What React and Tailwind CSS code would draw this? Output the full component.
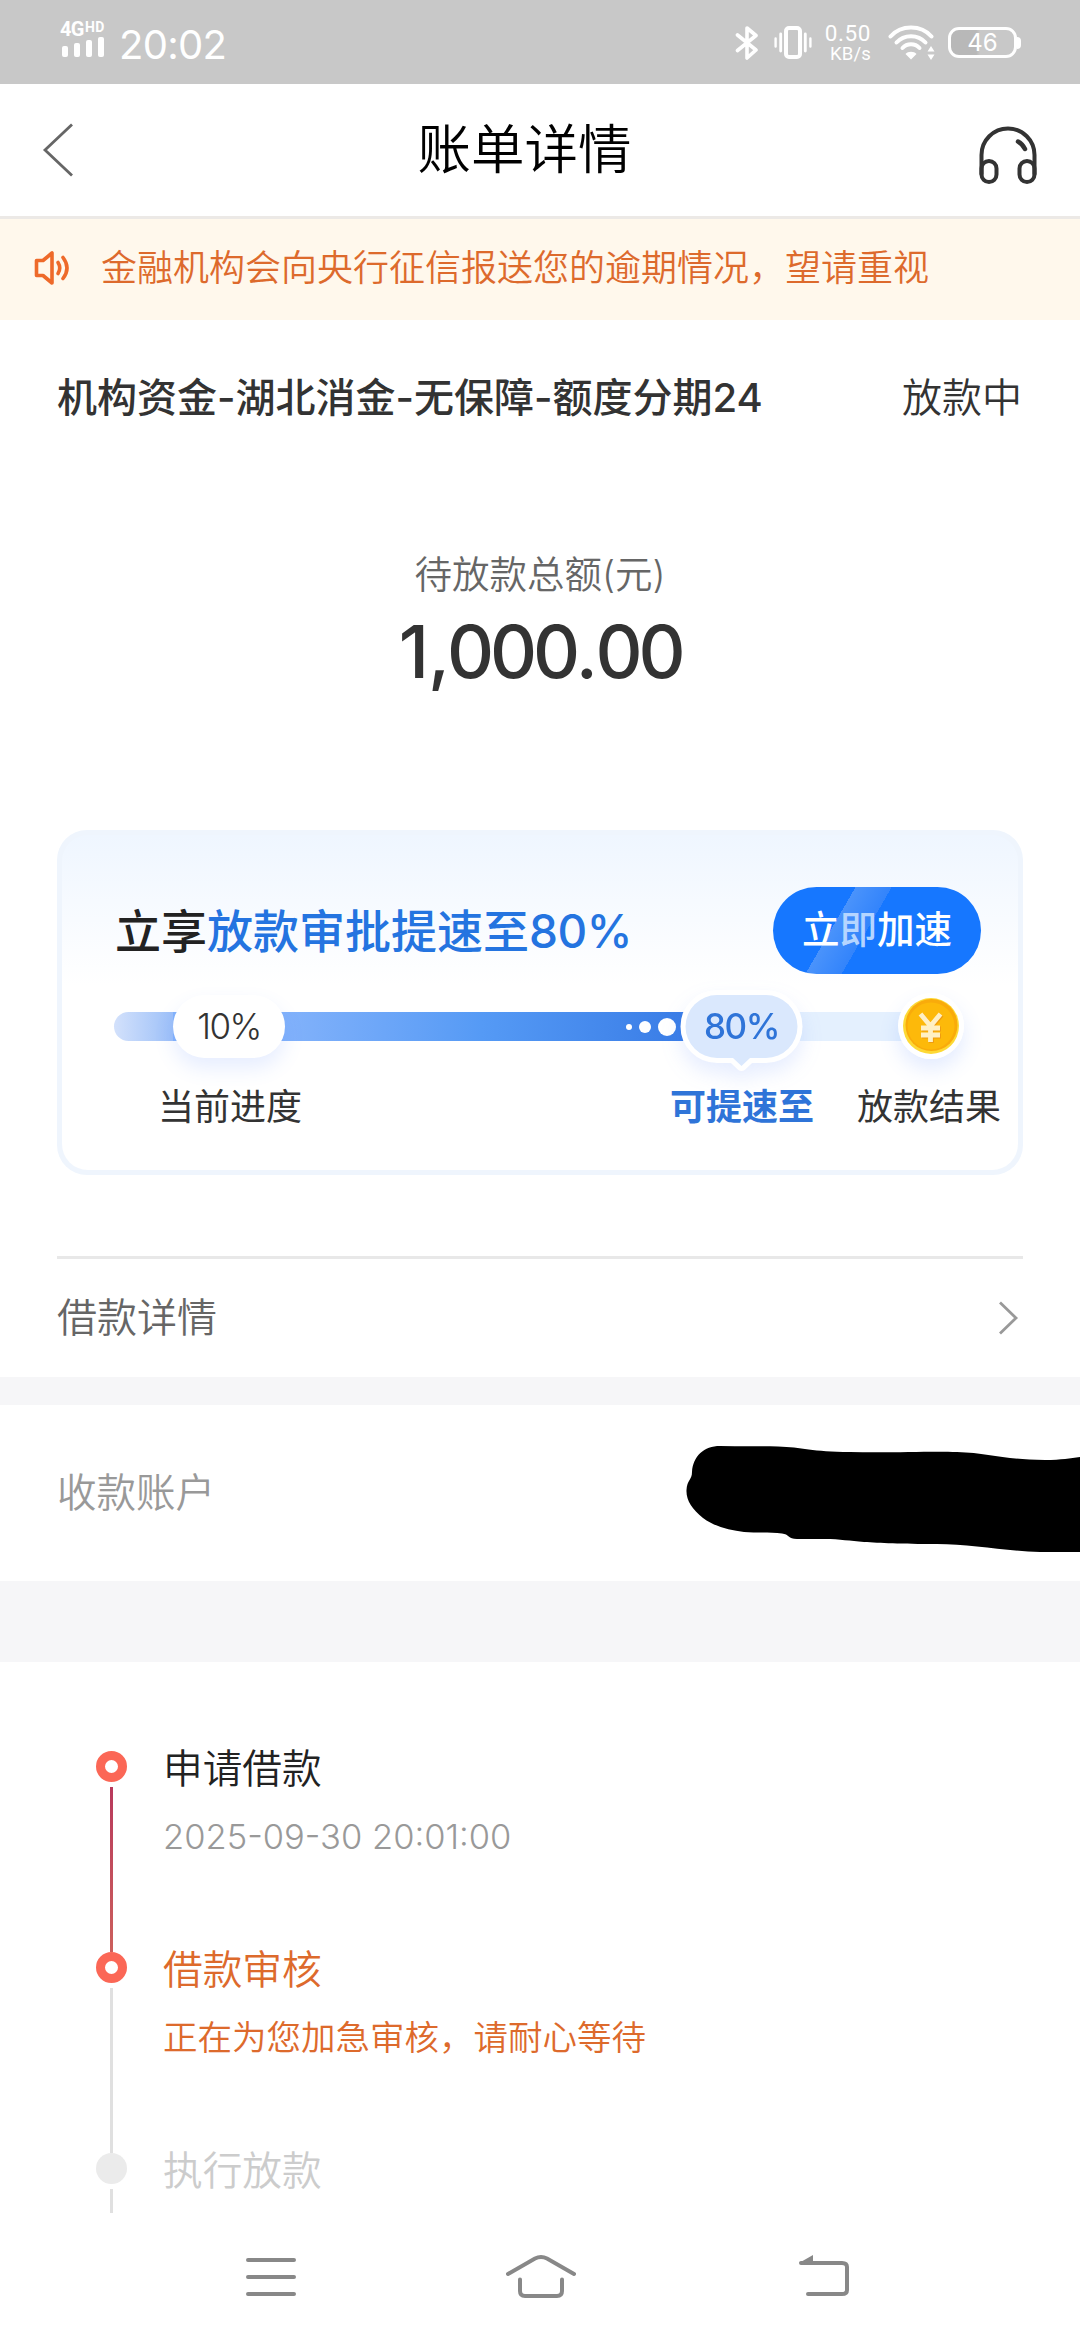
import { clsx } from "clsx"

const steps = [
  { title: "申请借款", desc: "2025-09-30 20:01:00", state: "done" },
  { title: "借款审核", desc: "正在为您加急审核，请耐心等待", state: "active" },
  { title: "执行放款", desc: "", state: "pending" },
]

function StatusBar() {
  return (
    <div className="flex h-[84px] shrink-0 items-start justify-between bg-[#c8c8c8] pr-[59px] pl-[60px] text-white">
      <div className="flex items-start">
        <div className="flex w-[46px] flex-col pt-[21px]">
          <div className="flex h-[15px] items-start font-bold">
            <span className="w-[25px] font-[Roboto,sans-serif] text-[20px] leading-[17px] tracking-[-0.6px]">4G</span>
            <span className="font-[Roboto,sans-serif] text-[14px] leading-[13px] tracking-[0.4px]">HD</span>
          </div>
          <div className="flex h-[21px] items-end gap-[6px] pl-[2px]">
            <i className="h-[11px] w-[6px] rounded-[2px] bg-white" />
            <i className="h-[14px] w-[6px] rounded-[2px] bg-white" />
            <i className="h-[17px] w-[6px] rounded-[2px] bg-white" />
            <i className="h-[20px] w-[6px] rounded-[2px] bg-white" />
          </div>
        </div>
        <span className="pt-[20px] pl-[13px] text-[40px] leading-[49px] tracking-[-0.7px]">20:02</span>
      </div>

      <div className="flex items-start pt-[25px]">
        <svg className="h-[36px] w-[24px]" viewBox="0 0 24 36" fill="none" stroke="currentColor" strokeWidth="3.6" strokeLinejoin="round" strokeLinecap="round">
          <path d="M2.5 10 L21 25 L12 33 V3 L21 10.5 L2.5 25.5" />
        </svg>
        <svg className="ml-[15px] h-[34px] w-[38px]" viewBox="0 0 38 34" fill="none" stroke="currentColor" strokeLinecap="round">
          <rect x="12" y="3" width="14" height="29" rx="3" strokeWidth="4" />
          <path d="M6.7 9v17M31.3 9v17" strokeWidth="2.8" />
          <path d="M1.6 13.5v8M36.4 13.5v8" strokeWidth="2.4" />
        </svg>
        <div className="ml-[11px] flex w-[49px] flex-col items-end pr-[1px] font-[Roboto,sans-serif]">
          <span className="h-[18px] text-[22.5px] leading-[17px] tracking-[0.6px]">0.50</span>
          <span className="mt-[1px] text-[18.5px] leading-[20px] tracking-[0.2px]">KB/s</span>
        </div>
        <svg className="ml-[16px] h-[36px] w-[48px]" viewBox="0 0 48 36" fill="none" stroke="currentColor" strokeWidth="4" strokeLinecap="round">
          <path d="M2.5 11.5 C13 -0.5 33 -0.5 43.5 11.5" />
          <path d="M8.5 17.5 C16 9 30 9 37.5 17.5" />
          <path d="M14.5 23 C19 18 27 18 31.5 23" />
          <path d="M17.5 29 C20 26 26 26 28.5 29 L23 34.5 Z" fill="currentColor" stroke="none" />
          <path d="M39.5 26.5 L43 21 L46.5 26.5 Z M39.5 29.5 L43 35 L46.5 29.5 Z" fill="currentColor" stroke="none" />
        </svg>
        <div className="mt-[2px] ml-[12px] flex h-[31px] items-center">
          <div className="flex h-[31px] w-[69px] items-center justify-center rounded-[11px] border-[3px] border-white bg-linear-to-r from-[#b8b8b8] from-40% to-[#c8c8c8] to-46% text-[24px] leading-none">
            46
          </div>
          <i className="h-[12px] w-[4px] rounded-r-[4px] bg-white" />
        </div>
      </div>
    </div>
  )
}

function Header() {
  return (
    <div className="flex h-[135px] shrink-0 items-center justify-between border-b-[3px] border-[#ece9e6] pr-[43px] pl-[42px]">
      <svg className="h-[54px] w-[32px]" viewBox="0 0 32 54" fill="none" stroke="#666" strokeWidth="2.8">
        <path d="M30 1.5 L3 27 L30 52.5" />
      </svg>
      <h1 className="mr-[4px] pb-[1px] text-[53.5px] leading-[60px] font-[350] text-black">账单详情</h1>
      <svg className="mt-[10px] h-[58px] w-[58px]" viewBox="0 0 58 58" fill="none" stroke="#333" strokeWidth="4" strokeLinecap="round">
        <path d="M2.5 48 V29 A26.5 26.5 0 0 1 55.5 29 V48" />
        <rect x="2.5" y="35" width="15" height="21" rx="7.5" />
        <rect x="40.5" y="35" width="15" height="21" rx="7.5" />
        <path d="M39 15.5 Q43.5 18 46 23" strokeWidth="4.5" />
      </svg>
    </div>
  )
}

function Notice() {
  return (
    <div className="flex h-[101px] shrink-0 items-center bg-[#fff8ec] pb-[3px] pl-[34px] text-[#dd6a2c]">
      <svg className="h-[36px] w-[36px]" viewBox="0 0 36 36" fill="none" stroke="#ee6a2a" strokeWidth="3.6" strokeLinecap="round" strokeLinejoin="round">
        <path d="M2.5 10.5 H9 L18 3 V33 L9 25.500 H2.500 Z" />
        <path d="M24 12.500 Q27.500 18 24 23.500" />
        <path d="M29 7.500 Q37 18 29 28.500" />
      </svg>
      <p className="ml-[31px] text-[36px] leading-[48px] font-[350]">金融机构会向央行征信报送您的逾期情况，望请重视</p>
    </div>
  )
}

function Coin() {
  return (
    <svg className="h-[66px] w-[66px] overflow-visible rounded-full shadow-[0_10px_20px_rgba(80,130,255,0.16)]" viewBox="0 0 66 66">
      <circle cx="33" cy="33" r="33" fill="#fff" />
      <circle cx="33" cy="33" r="28" fill="#fdd935" />
      <circle cx="33.500" cy="32" r="26" fill="#f9ab0b" />
      <circle cx="33" cy="33" r="23.500" fill="#fdb90a" />
      <g fill="none" strokeWidth="4.800">
        <path d="M23.500 22 L33.500 34 L43.500 22 M33.500 34 V50 M24 36 H43 M24 43 H43" stroke="#ef9c10" />
        <path d="M22.500 21 L32.500 33 L42.500 21 M32.500 33 V49 M23 35 H42 M23 42 H42" stroke="#fff0c4" />
      </g>
    </svg>
  )
}

function SpeedCard() {
  return (
    <div className="mx-[57px] h-[345px] shrink-0 rounded-[30px] bg-[#eff5fd] p-[5px]">
      <div className="flex h-full flex-col rounded-[26px] bg-linear-to-b from-[#eff6ff] to-white to-45%">
        <div className="mt-[52px] flex h-[87px] items-center justify-between pr-[37px] pl-[53px]">
          <p className="text-[46px] leading-[60px] font-medium text-[#222]">
            立享<span className="text-[#2474e0]">放款审批提速至<span className="tracking-[-0.5px]">80%</span></span>
          </p>
          <button className="h-[87px] w-[208px] rounded-full bg-[linear-gradient(120deg,#1677ff_32%,#4a93fb_32%,#3384fb_46%,#1677ff_46%)] text-[37.5px] font-medium text-white">
            立<span className="text-[#b5d5ff]">即</span>加速
          </button>
        </div>

        {/* progress track */}
        <div className="relative mt-[38px] ml-[52px] flex h-[29px] w-[817px]">
          <div className="w-[59px] rounded-l-full bg-linear-to-r from-[#d3e1fb] to-[#9dc0f8]" />
          <div className="flex w-[514px] items-center justify-end gap-[7px] bg-linear-to-r from-[#84b3fb] from-20% via-[#559af5] via-60% to-[#397ce6] pr-[11px]">
            <i className="h-[6px] w-[6px] rounded-full bg-white" />
            <i className="h-[12px] w-[12px] rounded-full bg-white" />
            <i className="h-[18px] w-[18px] rounded-full bg-white" />
          </div>
          <div className="flex-1 bg-[#e4f0fe]" />

          <div className="absolute top-[-17px] left-[59px] flex h-[63px] w-[112px] items-center justify-center rounded-[32px] bg-white text-[35px] font-[350] tracking-[-1.5px] text-[#333] shadow-[0_10px_20px_rgba(80,130,255,0.14)]">
            10%
          </div>
          <div className="absolute top-[-22px] left-[566px] drop-shadow-[0_10px_10px_rgba(80,130,255,0.14)]">
            <svg className="h-[86px] w-[123px]" viewBox="0 0 123 86">
              <path
                d="M37 5 H86 A31.500 31.500 0 0 1 86 68 H70 L61.500 76 L53 68 H37 A31.500 31.500 0 0 1 37 5 Z"
                fill="#dae8fd"
                stroke="#fff"
                strokeWidth="10"
                strokeLinejoin="round"
                paintOrder="stroke"
              />
            </svg>
            <span className="absolute inset-x-0 top-[5px] text-center text-[35px] leading-[63px] font-medium tracking-[-1.5px] text-[#2f74d8]">80%</span>
          </div>
          <div className="absolute top-[-19px] left-[784px]">
            <Coin />
          </div>
        </div>

        <div className="mt-[42px] flex pl-[96px] text-[36px] leading-[48px] text-[#333]">
          <span className="w-[512px]">当前进度</span>
          <span className="w-[187px] font-bold text-[#2f74d8]">可提速至</span>
          <span>放款结果</span>
        </div>
      </div>
    </div>
  )
}

function Account() {
  return (
    <div className="flex h-[176px] shrink-0 items-center justify-between pl-[57px]">
      <span className="pt-[2px] text-[39.5px] font-[350] text-[#999]">收款账户</span>
      <svg className="mt-[12px] h-[108px] w-[394px]" viewBox="686 1445 394 108">
        <path d="M720 1446 C740 1446.500 760 1446 778 1446.500 C802 1447 812 1452 850 1452 C890 1453 930 1451 957 1452 C990 1453 1005 1460 1045 1460 C1062 1460 1070 1458 1080 1457 V1552 H1040 C1005 1551 970 1544 937 1544 C900 1544 880 1543 864 1542 C850 1541 840 1539 825 1539 H797 C788 1539 789 1534 782 1533.500 C770 1532 755 1533 744 1532 C730 1530 715 1527 703 1518 C692 1509 686 1500 686.500 1490 C687 1480 692 1480 692 1472 C693 1456 704 1446 720 1446 Z" fill="#000" />
      </svg>
    </div>
  )
}

function Timeline() {
  return (
    <div className="flex h-[551px] shrink-0 flex-col overflow-hidden pt-[89px] pl-[96px]">
      {steps.map((step) => (
        <div key={step.title} className="flex h-[201px] shrink-0">
          <div className="flex w-[31px] flex-col items-center">
            <div
              className={clsx(
                "h-[31px] w-[31px] shrink-0 rounded-full",
                step.state === "pending" ? "bg-[#ebebeb]" : "border-[9.5px] border-[#fb6756] bg-white"
              )}
            />
            <div
              className={clsx(
                "mt-[5px] w-[3px] flex-1",
                step.state === "done" ? "bg-linear-to-b from-[#b8395c] to-[#cc5f5c]" : "bg-[#e0e0e0]"
              )}
            />
          </div>
          <div className="ml-[36px] flex flex-col font-[350]">
            <span
              className={clsx(
                "mt-[-6px] text-[39.7px] leading-[48px]",
                step.state === "done" && "text-[#222]",
                step.state === "active" && "text-[#dd6a2c]",
                step.state === "pending" && "text-[#ccc]"
              )}
            >
              {step.title}
            </span>
            <span
              className={clsx(
                "mt-[20px] text-[34.5px] leading-[48px]",
                step.state === "active" ? "text-[#dd6a2c]" : "text-[#999]"
              )}
            >
              {step.desc}
            </span>
          </div>
        </div>
      ))}
    </div>
  )
}

function NavBar() {
  return (
    <div className="flex flex-1 items-start pt-[40px] pl-[246px] text-[#888]">
      <svg className="h-[48px] w-[50px]" viewBox="0 0 50 48" fill="none" stroke="currentColor" strokeWidth="4" strokeLinecap="round">
        <path d="M2 7h46M2 24h46M2 41h46" />
      </svg>
      <svg className="ml-[210px] h-[48px] w-[70px]" viewBox="0 0 70 48" fill="none" stroke="currentColor" strokeWidth="4" strokeLinecap="round">
        <path d="M2 21 L29 5.500 Q35 2.500 41 5.500 L68 21" />
        <path d="M14 26.500 V38 Q14 43 19 43 H51 Q56 43 56 38 V26.500" />
      </svg>
      <svg className="ml-[222px] h-[48px] w-[52px]" viewBox="0 0 52 48" fill="none" stroke="currentColor" strokeWidth="4" strokeLinecap="round">
        <path d="M3 10 H44 Q49 10 49 14 V37 Q49 41 44 41 H10" />
        <path d="M1 10 L15 2 V11 Z" fill="currentColor" stroke="none" />
      </svg>
    </div>
  )
}

export default function App() {
  return (
    <div className="flex h-[2340px] w-[1080px] flex-col overflow-hidden bg-white font-[Inter,'Noto_Sans_CJK_SC',sans-serif]">
      <StatusBar />
      <Header />
      <Notice />

      <div className="flex h-[154px] shrink-0 items-center justify-between pt-[2px] pr-[58px] pl-[57px] text-[40px] text-[#333]">
        <span className="font-medium">机构资金-湖北消金-无保障-额度分期24</span>
        <span className="font-[350]">放款中</span>
      </div>

      <div className="flex h-[356px] shrink-0 flex-col items-center pt-[77px]">
        <span className="text-[37.5px] leading-[48px] font-[350] text-[#666]">待放款总额(元)</span>
        <span className="mt-[6px] text-[73px] leading-[94px] font-medium tracking-[-4.2px] text-[#333]">
          <span className="tracking-[-1px]">1</span>
          <span className="tracking-[-3px]">,</span>000<span className="tracking-[-2.5px]">.</span>00
        </span>
      </div>

      <SpeedCard />

      <div className="mx-[57px] mt-[81px] flex h-[121px] shrink-0 items-center justify-between border-t-[3px] border-[#e8e8e8] pr-[5px]">
        <span className="text-[40px] font-[350] text-[#666]">借款详情</span>
        <svg className="h-[34px] w-[20px]" viewBox="0 0 20 34" fill="none" stroke="#999" strokeWidth="2.800">
          <path d="M2 1.500 L18 17 L2 32.500" />
        </svg>
      </div>
      <div className="h-[28px] shrink-0 bg-[#f6f6f8]" />
      <Account />
      <div className="h-[81px] shrink-0 bg-[#f6f6f8]" />

      <Timeline />
      <NavBar />
    </div>
  )
}
